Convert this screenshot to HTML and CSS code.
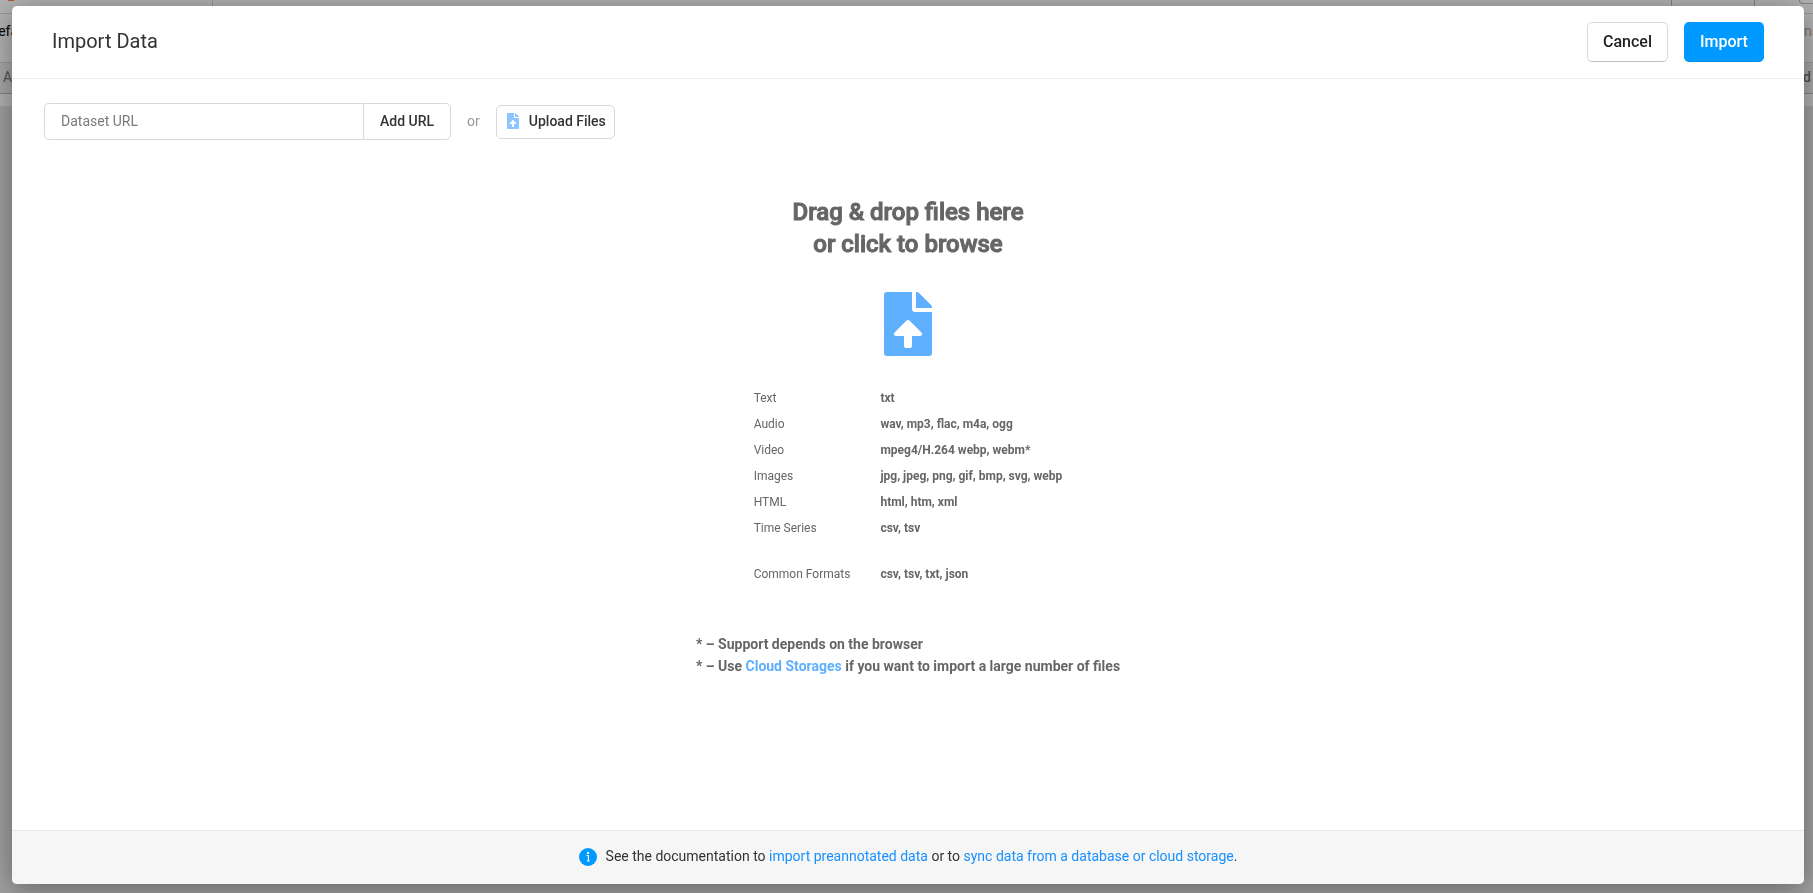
FILE: index.html
```html
<!DOCTYPE html>
<html lang="en">
<head>
<meta charset="utf-8">
<title>Import Data</title>
<link rel="stylesheet" href="styles.css">
</head>
<body>
<div class="page" aria-hidden="true">
  <div class="topbar"><span class="topbar-mark"></span><span class="topbar-crumb"></span><span class="topbar-box"></span><span class="avatar"></span></div>
  <div class="tabs"><span>Default</span><span class="tabs-actions">ns</span></div>
  <div class="columns"><span>A</span><span class="column-last">d</span></div>
  <div class="rows"></div>
</div>
<div class="overlay">
  <main class="modal" role="dialog" aria-labelledby="title">
    <header class="modal-header">
      <h1 class="modal-title" id="title">Import Data</h1>
      <div class="actions">
        <button class="button" type="button">Cancel</button>
        <button class="button button-primary" type="button">Import</button>
      </div>
    </header>
    <section class="content">
      <div class="sources">
        <form class="url-form">
          <input class="url-input" type="text" placeholder="Dataset URL" aria-label="Dataset URL">
          <button class="url-button" type="button">Add URL</button>
        </form>
        <span class="or">or</span>
        <button class="upload-button" type="button">
          <svg class="upload-icon" viewBox="0 0 48 64" aria-hidden="true"><path d="M3 0H28V17Q28 20 31 20H48V61Q48 64 45 64H3Q0 64 0 61V3Q0 0 3 0Z"/><path d="M32 0H33Q34 0 35 1L47 13Q48 14 48 15V16H32Z"/><path class="arrow" d="M20 44H12Q8 43 11 40L22 29Q24 27 26 29L37 40Q40 43 36 44H28V54Q28 56 26 56H22Q20 56 20 54Z"/></svg>
          Upload Files
        </button>
      </div>
      <div class="dropzone">
        <h2 class="drop-title">Drag &amp; drop files here<br>or click to browse</h2>
        <svg class="drop-icon" viewBox="0 0 48 64" aria-hidden="true"><path d="M3 0H28V17Q28 20 31 20H48V61Q48 64 45 64H3Q0 64 0 61V3Q0 0 3 0Z"/><path d="M32 0H33Q34 0 35 1L47 13Q48 14 48 15V16H32Z"/><path class="arrow" d="M20 44H12Q8 43 11 40L22 29Q24 27 26 29L37 40Q40 43 36 44H28V54Q28 56 26 56H22Q20 56 20 54Z"/></svg>
        <dl class="formats">
          <dt>Text</dt><dd>txt</dd>
          <dt>Audio</dt><dd>wav, mp3, flac, m4a, ogg</dd>
          <dt>Video</dt><dd>mpeg4/H.264 webp, webm*</dd>
          <dt>Images</dt><dd>jpg, jpeg, png, gif, bmp, svg, webp</dd>
          <dt>HTML</dt><dd>html, htm, xml</dd>
          <dt>Time Series</dt><dd>csv, tsv</dd>
          <dt class="common">Common Formats</dt><dd class="common">csv, tsv, txt, json</dd>
        </dl>
        <div class="notes">
          <p>* – Support depends on the browser</p>
          <p>* – Use <a href="#">Cloud Storages</a> if you want to import a large number of files</p>
        </div>
      </div>
    </section>
    <footer class="modal-footer">
      <svg class="info-icon" viewBox="0 0 18 18" aria-hidden="true"><circle cx="9" cy="9" r="9" fill="#0099ff"/><circle cx="9" cy="5" r="1.2" fill="#fff"/><path d="M7.5 7.5H9.4V13M8 13H10.6" fill="none" stroke="#fff" stroke-width="1.2"/></svg>
      <p>See the documentation to <a href="#">import preannotated data</a> or to <a href="#">sync data from a database or cloud storage</a>.</p>
    </footer>
  </main>
</div>
</body>
</html>
```
FILE: styles.css
```css
* { box-sizing: border-box; }

body {
  margin: 0;
  font-family: Roboto, "Liberation Sans", sans-serif;
  font-size: 14px;
  line-height: 22px;
  color: #333;
  overflow: hidden;
}

h1, h2, p, dl, dd { margin: 0; }
a { color: #1890ff; text-decoration: none; }
button, input { font: inherit; color: inherit; }
svg { flex: none; }

/* Page under the dialog */
.page { height: 100vh; display: flex; flex-direction: column; overflow: hidden; background: #fff; }
.topbar { height: 14px; display: flex; gap: 8px; border-bottom: 1px solid #d9d9d9; }
.topbar-mark { width: 6px; height: 1px; margin-left: 8px; background: #ff7a33; }
.topbar-crumb { width: 191px; border-right: 1px solid #d9d9d9; }
.topbar-box { flex: none; width: 84px; height: 8px; margin-left: auto; border: 1px solid #bbb; border-top: 0; border-radius: 0 0 4px 4px; }
.avatar { flex: none; width: 32px; height: 4px; margin: 0 -18px 0 36px; border: 1px solid #bbb; border-top: 0; border-radius: 0 0 16px 16px; }
.tabs { height: 49px; display: flex; justify-content: space-between; padding-top: 6px; color: #000; border-bottom: 1px solid #d9d9d9; }
.tabs span:first-child { margin-left: -11px; }
.tabs .tabs-actions { width: 9px; color: #aaa; }
.columns { height: 31px; display: flex; justify-content: space-between; padding: 3px 2px 0 3px; color: #777; background: #f0f0f0; border-bottom: 1px solid #bbb; }
.column-last { font-weight: 500; }
.rows { flex: 1; margin-top: 12px; background: #e6e6e6; }

.overlay {
  position: fixed;
  inset: 0;
  display: flex;
  padding: 6px 9px 9px 12px;
  background: rgba(0, 0, 0, 0.3);
}

.modal {
  flex: 1;
  display: flex;
  flex-direction: column;
  overflow: hidden;
  background: #fff;
  border-radius: 5px;
  box-shadow: 0 5px 30px rgba(0, 0, 0, 0.4);
}

.modal-header {
  display: flex;
  align-items: center;
  justify-content: space-between;
  padding: 16px 40px;
  border-bottom: 1px solid #f0f0f0;
}
.modal-title { font-size: 20px; font-weight: 400; padding-bottom: 2px; }
.actions { display: flex; gap: 16px; }

.button {
  min-width: 80px;
  height: 40px;
  padding: 0 15px;
  font-size: 16px;
  font-weight: 500;
  color: #1f1f1f;
  background: #fff;
  border: 1px solid #d9d9d9;
  border-bottom-color: #bfbfbf;
  border-radius: 5px;
}
.button-primary { color: #fff; background: #0099ff; border-color: #0099ff; border-bottom-color: #008ae6; }

.content { flex: 1; padding: 24px 32px; }
.sources { display: flex; align-items: center; gap: 16px; }
.url-form { display: flex; }
.url-input, .url-button, .upload-button { background: #fff; border: 1px solid #d9d9d9; }
.url-input { width: 319px; height: 37px; padding: 0 16px 2px; border-radius: 5px 0 0 5px; border-right: 0; }
.url-input::placeholder { color: #7a7a7a; }
.url-button { padding: 0 16px 2px; font-weight: 500; border-radius: 0 5px 5px 0; }
.or { padding-bottom: 2px; color: #999; }
.upload-button { display: flex; align-items: center; gap: 10px; height: 34px; padding: 0 8px 1px 10px; font-weight: 500; border-radius: 5px; }
.upload-icon { width: 12px; height: 16px; fill: #8cc5ff; }
.drop-icon { width: 48px; height: 64px; fill: #5eb0ff; }
.upload-icon .arrow, .drop-icon .arrow { fill: #fff; }

.dropzone { display: flex; flex-direction: column; align-items: center; padding-top: 56px; color: #666; }
.drop-title {
  margin-bottom: 32px;
  font-size: 24px;
  line-height: 32px;
  font-weight: 500;
  text-align: center;
  -webkit-text-stroke: 1px currentColor;
}
.formats { display: grid; grid-template-columns: auto auto; column-gap: 30px; row-gap: 4px; margin-top: 31px; font-size: 12px; }
.formats dd { font-weight: 700; }
.formats .common { margin-top: 20px; }
.notes { margin-top: 48px; font-weight: 700; }
.notes a { color: #5eb0ff; }

.modal-footer {
  display: flex;
  align-items: center;
  justify-content: center;
  gap: 9px;
  padding: 15px 16px 17px;
  line-height: 21px;
  background: #f6f6f6;
  border-top: 1px solid #e8e8e8;
}
.info-icon { width: 18px; height: 18px; }
```
